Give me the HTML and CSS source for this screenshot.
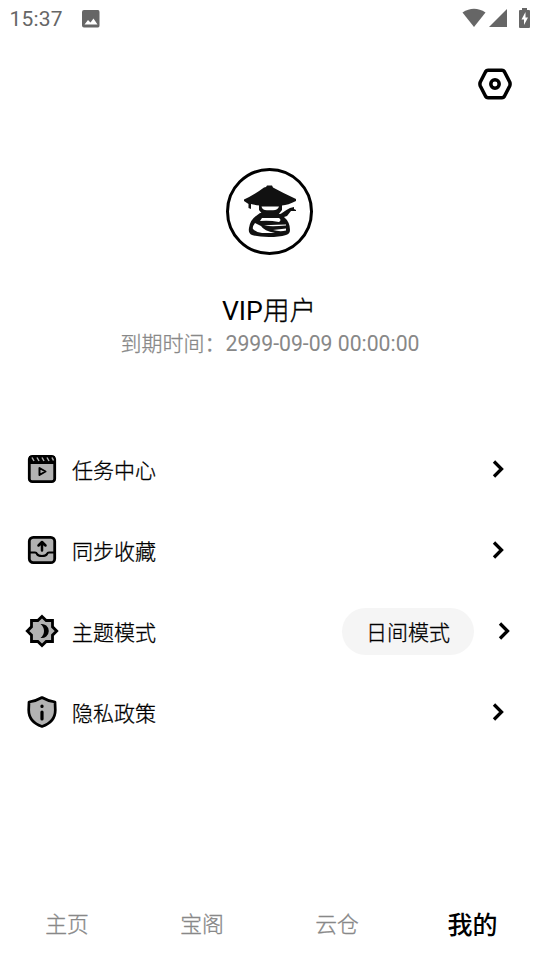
FILE: index.html
```html
<!DOCTYPE html>
<html lang="zh-CN">
<head>
<meta charset="utf-8">
<title>我的</title>
<link rel="stylesheet" href="styles.css">
</head>
<body>
<div class="screen">
  <header class="status">
    <span class="clock">15:37</span>
    <svg class="picture" width="18" height="18" viewBox="0 0 18 18"><path fill="#666" fill-rule="evenodd" d="M2 0H16Q17.500 0 17.500 2V15.500Q17.500 17.500 16 17.500H2Q0 17.500 0 15.500V2Q0 0 2 0ZM2.500 14.500H15.500L11.500 8.500L8.500 12.500L6 10Z"/></svg>
    <svg class="signals" width="70" height="22" viewBox="0 0 70 22" fill="#666"><path d="M.5 4.500Q12 -3 23.500 4.500L12 19Z"/><path d="M45 1V19H27Z"/><path fill-rule="evenodd" d="M60 0H65V2H67Q68 2 68 3V19Q68 20 67 20H58Q57 20 57 19V3Q57 2 58 2H60ZM63.500 4L59.500 11.500H62V17L66 9.500H63.500Z"/></svg>
  </header>
  <div class="toolbar">
    <svg width="36" height="34" viewBox="0 0 36 34" fill="none" stroke="#000" stroke-width="3.500" stroke-linejoin="round"><path d="M11 3.200H25Q26.500 3.200 27.300 4.500L32.700 15Q33.500 17 32.700 19L27.300 29.500Q26.500 30.800 25 30.800H11Q9.500 30.800 8.700 29.500L3.300 19Q2.500 17 3.300 15L8.700 4.500Q9.500 3.200 11 3.200Z"/><circle cx="18" cy="17" r="4.200"/></svg>
  </div>
  <section class="profile">
    <svg class="avatar" width="88" height="88" viewBox="0 0 88 88">
      <circle cx="43.500" cy="44.500" r="42" fill="#fff" stroke="#000" stroke-width="3"/>
      <g fill="#111">
        <path d="M18 32.500Q28 28 38 20.500L40 20L41 18.500H46L47 20.500Q57 26 70 32V34Q62 38 56 38.500H34Q28 38 25 37V42L22.500 41V37L18 34Z"/>
        <path fill-rule="evenodd" d="M33 37H56V43L52 48H37L33 43ZM35.500 39.500Q36 43 41 43.200H47Q52 43 53 39.500Z"/>
        <path fill-rule="evenodd" d="M34 46H51Q54 48 56 46Q60 43 64 41L68 40V42L70 43V44H65L61 49L58 50Q64 55 64 63Q64 67 60 68Q53 70 43 70Q32 70 26 68Q22 66 23 61Q24 53 30 49ZM36 51L34 54Q43 53 53 55Q56 53 53 51ZM29 56Q26 60 27 62Q30 65 36 66H49Q38 64 35 59ZM38 58.500Q45 60 60 58.500V57.500Q52 57.500 38 58.500ZM47 63Q54 65 60 63.500V61.500Z"/>
      </g>
    </svg>
    <h1 class="name">VIP<span class="cjk">用户</span></h1>
    <p class="expiry"><span class="caption">到期时间：</span>2999-09-09 00:00:00</p>
  </section>
  <main class="menu">
    <div class="row">
      <svg class="icon" width="34" height="34" viewBox="0 0 34 34"><rect x="4.300" y="4.300" width="25.400" height="25.400" rx="3" fill="#b2b2b2" stroke="#000" stroke-width="2.800"/><path d="M4 4H30V12H4Z"/><path d="M7 5.500l2 3.500M12 5.500l2 3.500M17 5.500l2 3.500M22 5.500l2 3.500M27 5.500l1.500 3" stroke="#b2b2b2" stroke-width="1.500"/><path d="M14.500 16L20.500 19.500L14.500 23Z" fill="none" stroke="#000" stroke-width="2" stroke-linejoin="round"/></svg>
      <span class="label">任务中心</span>
      <svg class="arrow" width="14" height="20" viewBox="0 0 14 20"><path d="M3 2.500L10.500 10L3 17.500"/></svg>
    </div>
    <div class="row">
      <svg class="icon" width="34" height="34" viewBox="0 0 34 34" fill="none" stroke="#000" stroke-width="2.800" stroke-linecap="round" stroke-linejoin="round"><rect x="4.300" y="4.300" width="25.400" height="25.400" rx="4" fill="#b2b2b2"/><path d="M4.500 19.500H10Q11.500 19.500 12 21Q13 23 17 23T22 21Q22.500 19.500 24 19.500H29.500" stroke-width="2.200"/><path d="M17 17.500V9.500M13.500 12.500L17 9L20.500 12.500" stroke-width="2.500"/></svg>
      <span class="label">同步收藏</span>
      <svg class="arrow" width="14" height="20" viewBox="0 0 14 20"><path d="M3 2.500L10.500 10L3 17.500"/></svg>
    </div>
    <div class="row theme">
      <svg class="icon" width="34" height="34" viewBox="0 0 34 34"><path d="M17 2.500L21.200 6.500H27.500V12.800L31.700 17L27.500 21.200V27.500H21.200L17 31.500L12.800 27.500H6.500V21.200L2.300 17L6.500 12.800V6.500H12.800Z" fill="#b2b2b2" stroke="#000" stroke-width="2.800"/><path d="M15.500 10A7.100 7.100 0 1 1 15.500 24Q19 21 19 17T15.500 10Z"/></svg>
      <span class="label">主题模式</span>
      <span class="mode">日间模式</span>
      <svg class="arrow" width="14" height="20" viewBox="0 0 14 20"><path d="M3 2.500L10.500 10L3 17.500"/></svg>
    </div>
    <div class="row">
      <svg class="icon" width="34" height="34" viewBox="0 0 34 34"><path d="M17 2.500Q23 6 30 7L30.300 15Q30.300 27 17 31.500Q3.700 27 3.700 15L4 7Q11 6 17 2.500Z" fill="#b2b2b2" stroke="#000" stroke-width="2.700" stroke-linejoin="round"/><path d="M17 11V11.500M17 17V24" stroke="#000" stroke-width="3.200" stroke-linecap="round"/></svg>
      <span class="label">隐私政策</span>
      <svg class="arrow" width="14" height="20" viewBox="0 0 14 20"><path d="M3 2.500L10.500 10L3 17.500"/></svg>
    </div>
  </main>
  <nav class="tabs">
    <span class="tab">主页</span>
    <span class="tab">宝阁</span>
    <span class="tab">云仓</span>
    <span class="tab active">我的</span>
  </nav>
</div>
</body>
</html>
```
FILE: styles.css
```css
* { box-sizing: border-box; }
body { margin: 0; background: #fff; color: #000; font-family: Roboto, "Noto Sans CJK SC", sans-serif; }
.screen { width: 540px; height: 960px; display: flex; flex-direction: column; }
svg { display: block; flex: none; }
.status { height: 38px; display: flex; align-items: center; padding: 0 8px 0 9.5px; color: #666; }
.clock { font-size: 21px; line-height: 24px; width: 72px; letter-spacing: 0.2px; }
.picture { margin-bottom: 1px; }
.signals { margin-left: auto; }
.toolbar { height: 92px; display: flex; justify-content: flex-end; align-items: center; padding-right: 27px; }
.profile { display: flex; flex-direction: column; align-items: center; margin-top: 37px; height: 261px; }
.name { margin: 39px 0 0; font-size: 26.6px; line-height: 34px; font-weight: 400; padding-right: 2px; }
.expiry { margin: 0; font-size: 21.2px; line-height: 32px; color: #888; }
.caption { font-size: 21px; }
.cjk, .caption, .label, .mode, .tab { font-weight: 300; -webkit-text-stroke: 0.3px currentColor; }
.row { height: 81px; display: flex; align-items: center; padding: 0 35px 0 25px; }
.theme { padding-right: 29px; }
.label { font-size: 21px; line-height: 32px; margin-left: 13px; margin-right: auto; padding-top: 4px; }
.mode { width: 132px; height: 47px; border-radius: 24px; background: #f5f5f5; font-size: 21px; line-height: 47px; padding-top: 2px; text-align: center; margin: 2px 23px 0 0; }
.arrow { fill: none; stroke: #000; stroke-width: 3.300; }
.tabs { margin-top: auto; height: 70px; display: flex; align-items: center; }
.tab { width: 135px; text-align: center; font-size: 21.8px; line-height: 36px; color: #888; padding-right: 1px; }
.active { font-size: 25px; color: #000; font-weight: 500; -webkit-text-stroke: 0; padding: 2px 0 0; }
```
